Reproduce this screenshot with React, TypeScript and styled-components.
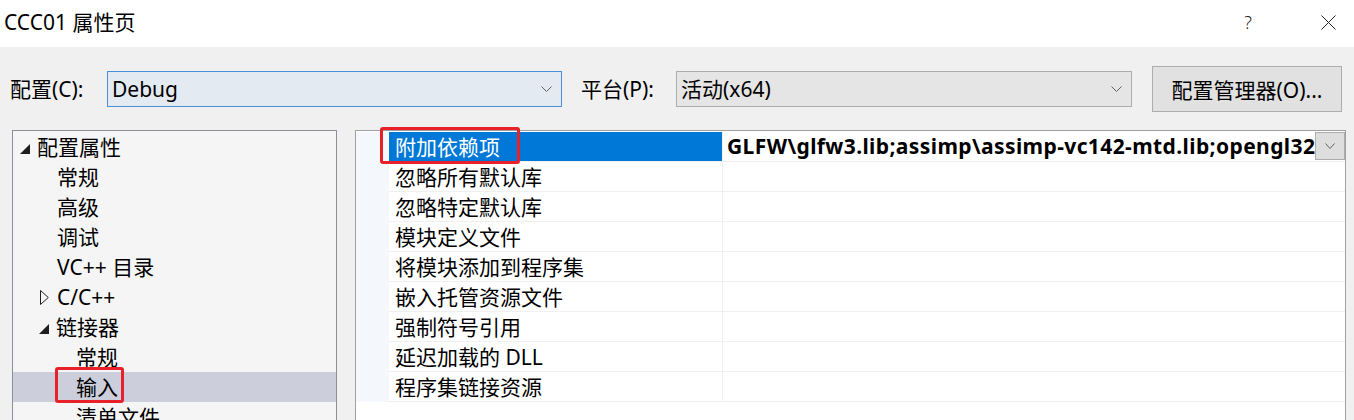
import styled, { createGlobalStyle } from "styled-components"

const GlobalStyle = createGlobalStyle`
  html, body {
    margin: 0;
    padding: 0;
    background: #f0f0f0;
    overflow: hidden;
  }
  body {
    font-family: "Noto Sans", "Noto Sans CJK SC", sans-serif;
    font-size: 21px;
    color: #000;
  }
  * {
    box-sizing: border-box;
  }
`

const Window = styled.div`
  width: 1354px;
  height: 420px;
  overflow: hidden;
  background: #f0f0f0;
`

const TitleBar = styled.div`
  height: 47px;
  background: #fff;
  display: flex;
  align-items: center;
  padding-left: 4px;
`

const Title = styled.div`
  flex: 1;
  line-height: 28px;
  padding-bottom: 3px;
  white-space: nowrap;
`

const WindowButton = styled.div<{ $w: number }>`
  width: ${(p) => p.$w}px;
  height: 47px;
  display: flex;
  align-items: center;
  justify-content: center;
  font-size: 18px;
  font-weight: 300;
  color: #222;
  padding-bottom: 3px;
`

const Toolbar = styled.div`
  display: flex;
  align-items: center;
  height: 46px;
  margin: 19px 0 18px;
  padding-left: 10px;
`

const FieldLabel = styled.div<{ $w: number; $gap?: number }>`
  width: ${(p) => p.$w}px;
  margin-left: ${(p) => p.$gap ?? 0}px;
  flex: none;
  white-space: nowrap;
  line-height: 30px;
`

const Select = styled.div<{ $w: number; $focused?: boolean }>`
  width: ${(p) => p.$w}px;
  height: 36px;
  flex: none;
  display: flex;
  align-items: center;
  justify-content: space-between;
  padding: 0 9px 0 4px;
  border: 1px solid ${(p) => (p.$focused ? "#4a90d9" : "#acacac")};
  background: ${(p) => (p.$focused ? "#e4eaf1" : "#e5e5e5")};
  line-height: 30px;
`

const PushButton = styled.div`
  width: 190px;
  height: 46px;
  margin-left: 20px;
  flex: none;
  display: flex;
  align-items: center;
  justify-content: center;
  border: 1px solid #adadad;
  background: #e1e1e1;
  white-space: nowrap;
`

const Panels = styled.div`
  display: flex;
  gap: 18px;
  padding-left: 12px;
`

const TreePanel = styled.div`
  width: 325px;
  height: 300px;
  flex: none;
  border: 1px solid #8a8f98;
  background: #f5f5f5;
  padding-top: 1px;
`

const TreeRow = styled.div<{ $indent: number; $selected?: boolean }>`
  height: 30px;
  display: flex;
  align-items: center;
  padding-left: ${(p) => p.$indent}px;
  background: ${(p) => (p.$selected ? "#cccedb" : "transparent")};
`

const Expander = styled.div`
  width: 17px;
  height: 30px;
  flex: none;
  display: flex;
  align-items: center;
`

const ItemText = styled.span`
  position: relative;
  line-height: 30px;
  white-space: nowrap;
`

const Mark = styled.span<{ $t: number; $r: number; $b: number; $l: number }>`
  position: absolute;
  top: ${(p) => p.$t}px;
  right: ${(p) => p.$r}px;
  bottom: ${(p) => p.$b}px;
  left: ${(p) => p.$l}px;
  border: 3px solid #e8202a;
  border-radius: 3px;
  pointer-events: none;
`

const GridPanel = styled.div`
  width: 991px;
  height: 300px;
  flex: none;
  border: 1px solid #a0a0a0;
  border-bottom: none;
  background: #fff;
  padding-top: 1px;
`

const PropRow = styled.div`
  display: flex;
  height: 30px;
`

const Gutter = styled.div`
  width: 33px;
  flex: none;
  background: #f4f7fb;
`

const NameCell = styled.div<{ $selected?: boolean }>`
  width: 334px;
  flex: none;
  padding-left: 6px;
  line-height: 29px;
  white-space: nowrap;
  border-bottom: 1px solid #f0f0f0;
  border-right: 1px solid #f0f0f0;
  background: ${(p) => (p.$selected ? "#0078d7" : "#fff")};
  color: ${(p) => (p.$selected ? "#fff" : "#000")};
`

const ValueCell = styled.div`
  flex: 1;
  min-width: 0;
  display: flex;
  align-items: flex-start;
  padding-left: 4px;
  border-bottom: 1px solid #f0f0f0;
`

const ValueText = styled.span`
  flex: 1;
  min-width: 0;
  overflow: hidden;
  white-space: nowrap;
  font-weight: 700;
  letter-spacing: 0.4px;
  line-height: 29px;
`

const DropButton = styled.div`
  width: 30px;
  height: 28px;
  flex: none;
  display: flex;
  align-items: center;
  justify-content: center;
  border: 1px solid #adadad;
  background: #dedede;
`

const Chevron = ({ w = 11 }: { w?: number }) => (
  <svg width={w} height="6" viewBox={`0 0 ${w} 6`}>
    <polyline
      points={`0.5,0.5 ${w / 2},5.5 ${w - 0.5},0.5`}
      fill="none"
      stroke="#606060"
      strokeWidth="1"
    />
  </svg>
)

const OpenArrow = () => (
  <svg width="10" height="10" viewBox="0 0 10 10" style={{ marginTop: 3 }}>
    <polygon points="10,0 10,10 0,10" fill="#1e1e1e" />
  </svg>
)

const ClosedArrow = () => (
  <svg width="9" height="15" viewBox="0 0 9 15">
    <polygon points="0.5,0.5 8.3,7.5 0.5,14.5" fill="none" stroke="#1e1e1e" strokeWidth="1" />
  </svg>
)

type TreeItem = {
  label: string
  indent: number
  arrow?: "open" | "closed"
  selected?: boolean
  marked?: boolean
}

const tree: TreeItem[] = [
  { label: "配置属性", indent: 7, arrow: "open" },
  { label: "常规", indent: 27 },
  { label: "高级", indent: 27 },
  { label: "调试", indent: 27 },
  { label: "VC++ 目录", indent: 27 },
  { label: "C/C++", indent: 27, arrow: "closed" },
  { label: "链接器", indent: 26, arrow: "open" },
  { label: "常规", indent: 46 },
  { label: "输入", indent: 46, selected: true, marked: true },
  { label: "清单文件", indent: 46 },
]

const props = [
  "附加依赖项",
  "忽略所有默认库",
  "忽略特定默认库",
  "模块定义文件",
  "将模块添加到程序集",
  "嵌入托管资源文件",
  "强制符号引用",
  "延迟加载的 DLL",
  "程序集链接资源",
]

export default function App() {
  return (
    <Window>
      <GlobalStyle />
      <TitleBar>
        <Title>CCC01 属性页</Title>
        <WindowButton $w={60}>?</WindowButton>
        <WindowButton $w={24} />
        <WindowButton $w={52}>
          <svg width="15" height="15" viewBox="0 0 15 15">
            <path d="M0.5 0.5 L14.5 14.5 M14.5 0.5 L0.5 14.5" stroke="#222" strokeWidth="1" />
          </svg>
        </WindowButton>
      </TitleBar>

      <Toolbar>
        <FieldLabel $w={97}>配置(C):</FieldLabel>
        <Select $w={455} $focused>
          <span>Debug</span>
          <Chevron />
        </Select>
        <FieldLabel $w={95} $gap={19}>平台(P):</FieldLabel>
        <Select $w={456}>
          <span>活动(x64)</span>
          <Chevron />
        </Select>
        <PushButton>配置管理器(O)...</PushButton>
      </Toolbar>

      <Panels>
        <TreePanel>
          {tree.map((item, i) => (
            <TreeRow key={i} $indent={item.indent} $selected={item.selected}>
              <Expander>
                {item.arrow === "open" && <OpenArrow />}
                {item.arrow === "closed" && <ClosedArrow />}
              </Expander>
              <ItemText>
                {item.label}
                {item.marked && <Mark $t={-5} $r={-6} $b={-1} $l={-21} />}
              </ItemText>
            </TreeRow>
          ))}
        </TreePanel>

        <GridPanel>
          {props.map((name, i) => (
            <PropRow key={name}>
              <Gutter />
              <NameCell $selected={i === 0}>
                <ItemText>
                  {name}
                  {i === 0 && <Mark $t={-6} $r={-20} $b={-3} $l={-15} />}
                </ItemText>
              </NameCell>
              <ValueCell>
                {i === 0 && (
                  <>
                    <ValueText>GLFW\glfw3.lib;assimp\assimp-vc142-mtd.lib;opengl32.lib;%(AdditionalDependencies)</ValueText>
                    <DropButton>
                      <Chevron w={10} />
                    </DropButton>
                  </>
                )}
              </ValueCell>
            </PropRow>
          ))}
        </GridPanel>
      </Panels>
    </Window>
  )
}
